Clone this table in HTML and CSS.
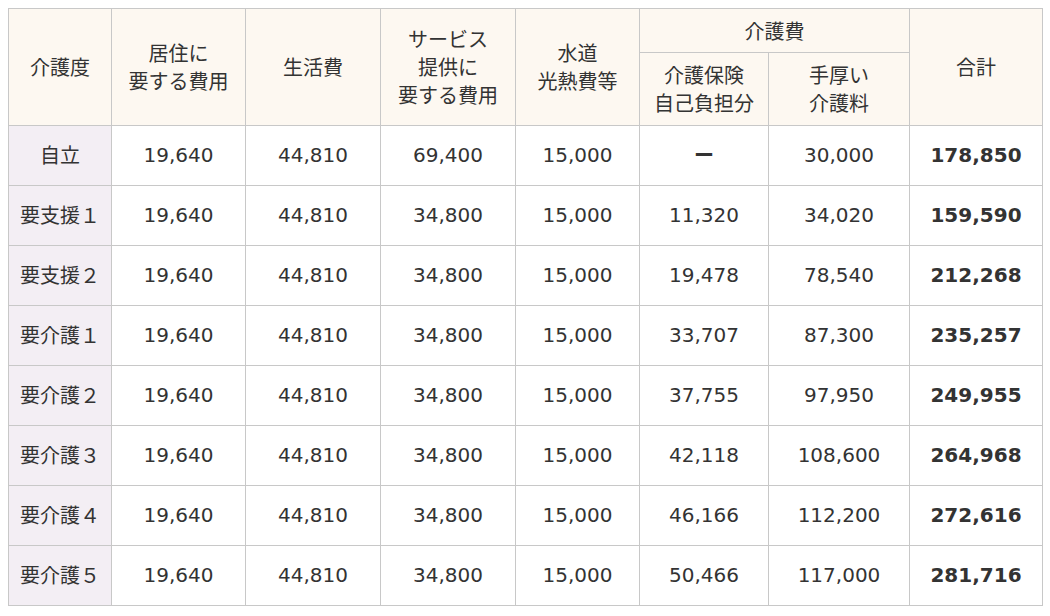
FILE: index.html
```html
<!DOCTYPE html>
<html lang="ja">
<head>
<meta charset="utf-8">
<link rel="stylesheet" href="styles.css">
</head>
<body>
<table class="cost">
  <colgroup>
    <col class="c1"><col class="c2"><col class="c3"><col class="c4"><col class="c5"><col class="c6"><col class="c7"><col class="c8">
  </colgroup>
  <thead>
    <tr class="h1">
      <th rowspan="2">介護度</th>
      <th rowspan="2">居住に<br>要する費用</th>
      <th rowspan="2">生活費</th>
      <th rowspan="2">サービス<br>提供に<br>要する費用</th>
      <th rowspan="2">水道<br>光熱費等</th>
      <th colspan="2">介護費</th>
      <th rowspan="2">合計</th>
    </tr>
    <tr class="h2">
      <th>介護保険<br>自己負担分</th>
      <th>手厚い<br>介護料</th>
    </tr>
  </thead>
  <tbody>
    <tr><th>自立</th><td>19,640</td><td>44,810</td><td>69,400</td><td>15,000</td><td class="dash">ー</td><td>30,000</td><td class="total">178,850</td></tr>
    <tr><th>要支援１</th><td>19,640</td><td>44,810</td><td>34,800</td><td>15,000</td><td>11,320</td><td>34,020</td><td class="total">159,590</td></tr>
    <tr><th>要支援２</th><td>19,640</td><td>44,810</td><td>34,800</td><td>15,000</td><td>19,478</td><td>78,540</td><td class="total">212,268</td></tr>
    <tr><th>要介護１</th><td>19,640</td><td>44,810</td><td>34,800</td><td>15,000</td><td>33,707</td><td>87,300</td><td class="total">235,257</td></tr>
    <tr><th>要介護２</th><td>19,640</td><td>44,810</td><td>34,800</td><td>15,000</td><td>37,755</td><td>97,950</td><td class="total">249,955</td></tr>
    <tr><th>要介護３</th><td>19,640</td><td>44,810</td><td>34,800</td><td>15,000</td><td>42,118</td><td>108,600</td><td class="total">264,968</td></tr>
    <tr><th>要介護４</th><td>19,640</td><td>44,810</td><td>34,800</td><td>15,000</td><td>46,166</td><td>112,200</td><td class="total">272,616</td></tr>
    <tr><th>要介護５</th><td>19,640</td><td>44,810</td><td>34,800</td><td>15,000</td><td>50,466</td><td>117,000</td><td class="total">281,716</td></tr>
  </tbody>
</table>
</body>
</html>
```
FILE: styles.css
```css
html, body {
  margin: 0;
  padding: 0;
  background: #ffffff;
}
body {
  padding: 8px 0 0 8px;
  font-family: "DejaVu Sans", "Noto Sans CJK JP", sans-serif;
  color: #333333;
}
.cost {
  border-collapse: collapse;
  table-layout: fixed;
  width: 1034px;
  font-size: 20px;
}
.c1 { width: 103px; }
.c2 { width: 134px; }
.c3 { width: 135px; }
.c4 { width: 135px; }
.c5 { width: 124px; }
.c6 { width: 129px; }
.c7 { width: 141px; }
.c8 { width: 133px; }
.cost th, .cost td {
  border: 1px solid #c8c8c8;
  padding: 0;
  text-align: center;
  vertical-align: middle;
  font-weight: normal;
  line-height: 26px;
}
.cost thead th {
  background: #fdf8f1;
  font-family: "Noto Sans CJK JP", sans-serif;
  font-size: 20px;
  line-height: 28px;
}
.h1 { height: 44px; }
.h2 { height: 73px; }
.cost tbody tr { height: 60px; }
.cost tbody th, .cost tbody td {
  padding-bottom: 2px;
}
.cost tbody th {
  background: #f3eef4;
  font-family: "Noto Sans CJK JP", sans-serif;
  font-size: 20px;
}
.cost td.dash {
  font-family: "Noto Sans CJK JP", sans-serif;
  font-weight: bold;
}
.cost td.total {
  font-weight: bold;
}
```
